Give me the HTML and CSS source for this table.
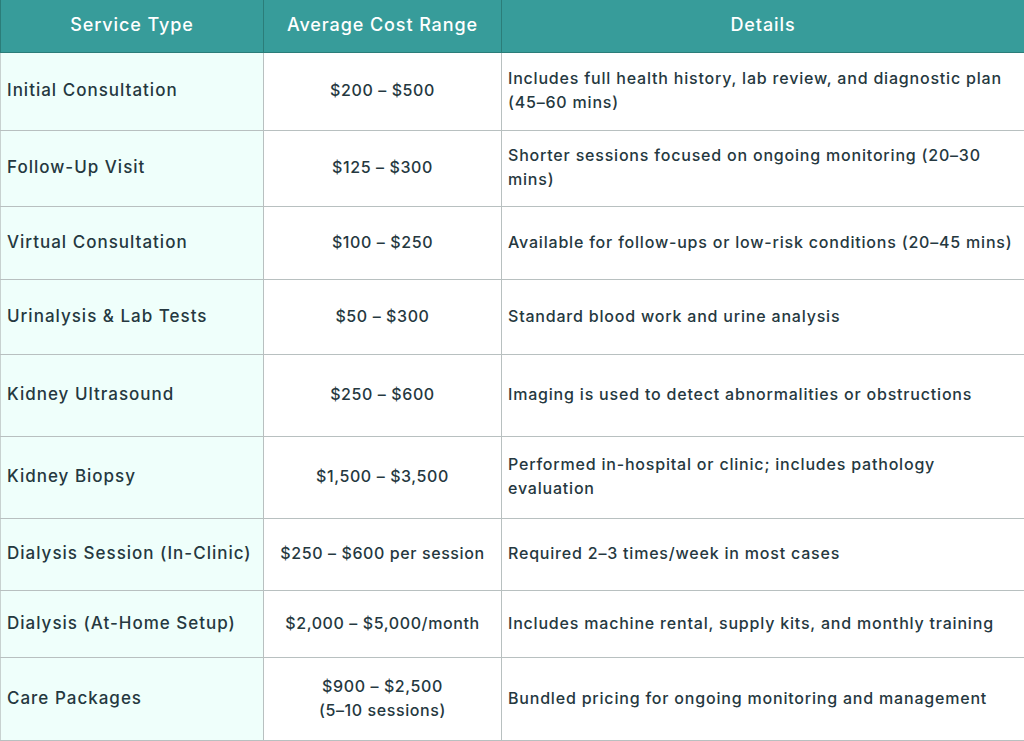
FILE: index.html
```html
<!DOCTYPE html>
<html lang="en">
<head>
<meta charset="utf-8">
<title>Nephrology Service Costs</title>
<link rel="stylesheet" href="styles.css">
</head>
<body>
<table class="cost-table">
  <colgroup>
    <col class="col-service">
    <col class="col-cost">
    <col class="col-details">
  </colgroup>
  <thead>
    <tr class="row-head">
      <th>Service Type</th>
      <th>Average Cost Range</th>
      <th>Details</th>
    </tr>
  </thead>
  <tbody>
    <tr class="r1">
      <td class="service">Initial Consultation</td>
      <td class="cost">$200 – $500</td>
      <td class="details">Includes full health history, lab review, and diagnostic plan (45–60 mins)</td>
    </tr>
    <tr class="r2">
      <td class="service">Follow-Up Visit</td>
      <td class="cost">$125 – $300</td>
      <td class="details">Shorter sessions focused on ongoing monitoring (20–30 mins)</td>
    </tr>
    <tr class="r3">
      <td class="service">Virtual Consultation</td>
      <td class="cost">$100 – $250</td>
      <td class="details">Available for follow-ups or low-risk conditions (20–45 mins)</td>
    </tr>
    <tr class="r4">
      <td class="service">Urinalysis &amp; Lab Tests</td>
      <td class="cost">$50 – $300</td>
      <td class="details">Standard blood work and urine analysis</td>
    </tr>
    <tr class="r5">
      <td class="service">Kidney Ultrasound</td>
      <td class="cost">$250 – $600</td>
      <td class="details">Imaging is used to detect abnormalities or obstructions</td>
    </tr>
    <tr class="r6">
      <td class="service">Kidney Biopsy</td>
      <td class="cost">$1,500 – $3,500</td>
      <td class="details">Performed in-hospital or clinic; includes pathology evaluation</td>
    </tr>
    <tr class="r7">
      <td class="service">Dialysis Session (In-Clinic)</td>
      <td class="cost">$250 – $600 per session</td>
      <td class="details">Required 2–3 times/week in most cases</td>
    </tr>
    <tr class="r8">
      <td class="service">Dialysis (At-Home Setup)</td>
      <td class="cost">$2,000 – $5,000/month</td>
      <td class="details">Includes machine rental, supply kits, and monthly training</td>
    </tr>
    <tr class="r9">
      <td class="service">Care Packages</td>
      <td class="cost">$900 – $2,500<br>(5–10 sessions)</td>
      <td class="details">Bundled pricing for ongoing monitoring and management</td>
    </tr>
  </tbody>
</table>
</body>
</html>
```
FILE: styles.css
```css
html, body {
  margin: 0;
  padding: 0;
  background: #ffffff;
}

.cost-table {
  width: 1024px;
  border-collapse: collapse;
  table-layout: fixed;
  font-family: "Inter", "Noto Sans", sans-serif;
  font-size: 16px;
  font-weight: 500;
  line-height: 24px;
  color: #253840;
}

.col-service { width: 263px; }
.col-cost { width: 238px; }
.col-details { width: 523px; }

.row-head th {
  height: 49px;
  background: #379c9a;
  color: #ffffff;
  font-weight: 500;
  font-size: 18px;
  letter-spacing: 0.9px;
  text-align: center;
  border: 1px solid #2b7d79;
  border-top: 0;
  padding: 0 8px 3px;
}

td {
  border: 1px solid #b8c0c0;
  padding: 0 7px;
  vertical-align: middle;
}

td.service {
  background: #effffb;
  font-size: 17px;
  letter-spacing: 1px;
  border-left-color: #c8d2d0;
  padding-left: 6px;
  padding-bottom: 3px;
}

td.cost {
  text-align: center;
  letter-spacing: 0.6px;
  padding-bottom: 3px;
}

td.details {
  letter-spacing: 0.8px;
  padding-left: 6px;
  padding-right: 4px;
  padding-bottom: 3px;
}

.r1 td { height: 74px; }
.r2 td { height: 72px; }
.r3 td { height: 69px; }
.r4 td { height: 71px; }
.r5 td { height: 78px; }
.r6 td { height: 78px; }
.r7 td { height: 68px; }
.r8 td { height: 63px; }
.r9 td { height: 79px; }
```
